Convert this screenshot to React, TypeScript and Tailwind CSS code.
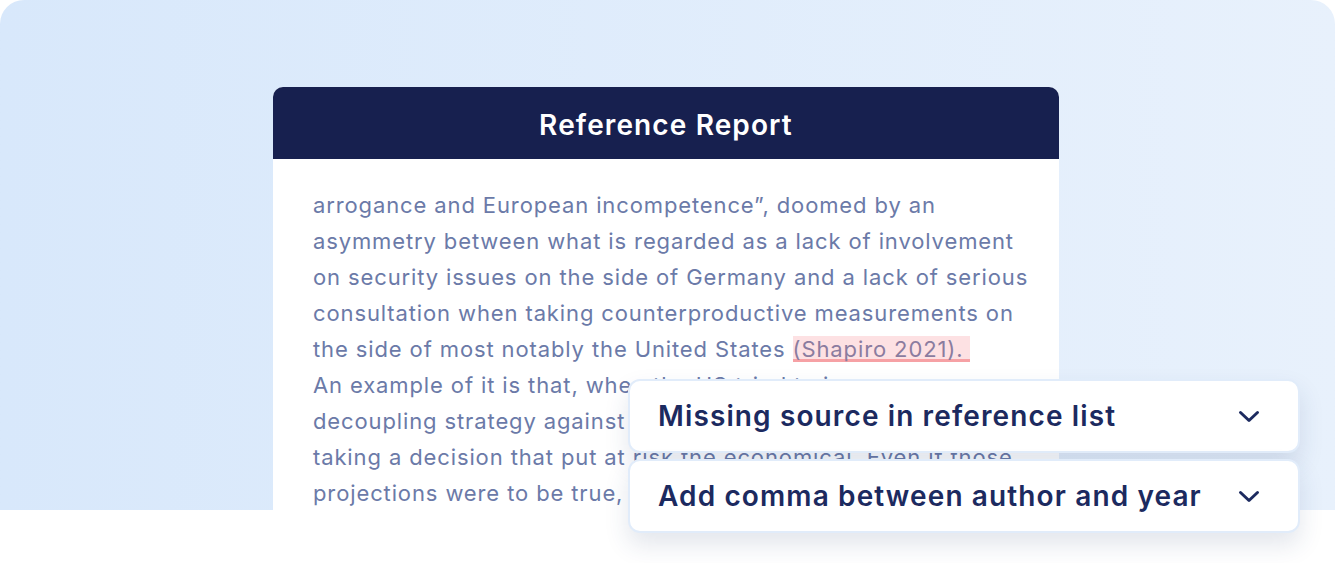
import React from "react";

const lines = [
  "arrogance and European incompetence\u201d, doomed by an",
  "asymmetry between what is regarded as a lack of involvement",
  "on security issues on the side of Germany and a lack of serious",
  "consultation when taking counterproductive measurements on",
];

function Chevron() {
  return (
    <svg width="22" height="13" viewBox="0 0 22 13" fill="none" className="shrink-0">
      <polyline
        points="2.5,2.5 11,10.5 19.5,2.5"
        stroke="#1c2a5f"
        strokeWidth="3"
        strokeLinecap="round"
        strokeLinejoin="round"
      />
    </svg>
  );
}

function Popup({ title }: { title: string }) {
  return (
    <div className="flex h-[74px] w-[672px] items-center justify-between rounded-[12px] border-2 border-[#e1ecfa] bg-white pl-[28px] pr-[38px] shadow-[0_12px_24px_rgba(40,60,110,0.13)]">
      <span className="text-[28px] font-semibold tracking-[0.04em] text-[#1c2a5f]">{title}</span>
      <Chevron />
    </div>
  );
}

export default function App() {
  return (
    <div
      className="relative h-[563px] w-[1335px] overflow-hidden bg-white"
      style={{ fontFamily: "Inter, 'Noto Sans', sans-serif" }}
    >
      <div className="h-[510px] overflow-hidden rounded-t-[24px] bg-gradient-to-r from-[#d8e8fb] to-[#e8f1fc] pl-[273px] pt-[87px]">
        <div className="h-[423px] w-[786px] overflow-hidden rounded-t-[10px] bg-white">
          <div className="flex h-[72px] items-center justify-center bg-[#17204f] pt-[4px]">
            <span className="text-[28px] font-semibold tracking-[0.04em] text-white">Reference Report</span>
          </div>
          <div className="px-[40px] pt-[28px] text-[22px] leading-[36px] tracking-[0.04em] text-[#6b7aa8]">
            {lines.map((l) => (
              <div key={l} className="whitespace-nowrap">{l}</div>
            ))}
            <div className="whitespace-nowrap">
              the side of most notably the United States{" "}
              <span className="bg-[#fde1e3] text-[#8b7c9f] shadow-[inset_0_-3px_0_#f6a1a5]">(Shapiro 2021).&nbsp;</span>
            </div>
            <div className="whitespace-nowrap">An example of it is that, when the US tried to impose a</div>
            <div className="whitespace-nowrap">decoupling strategy against China, they were consciously</div>
            <div className="whitespace-nowrap">taking a decision that put at risk the economical. Even if those</div>
            <div className="whitespace-nowrap">projections were to be true, the consequences for Europe</div>
          </div>
        </div>
      </div>
      <div className="absolute left-[628px] top-[379px] flex flex-col gap-[6px]">
        <Popup title="Missing source in reference list" />
        <Popup title="Add comma between author and year" />
      </div>
    </div>
  );
}
